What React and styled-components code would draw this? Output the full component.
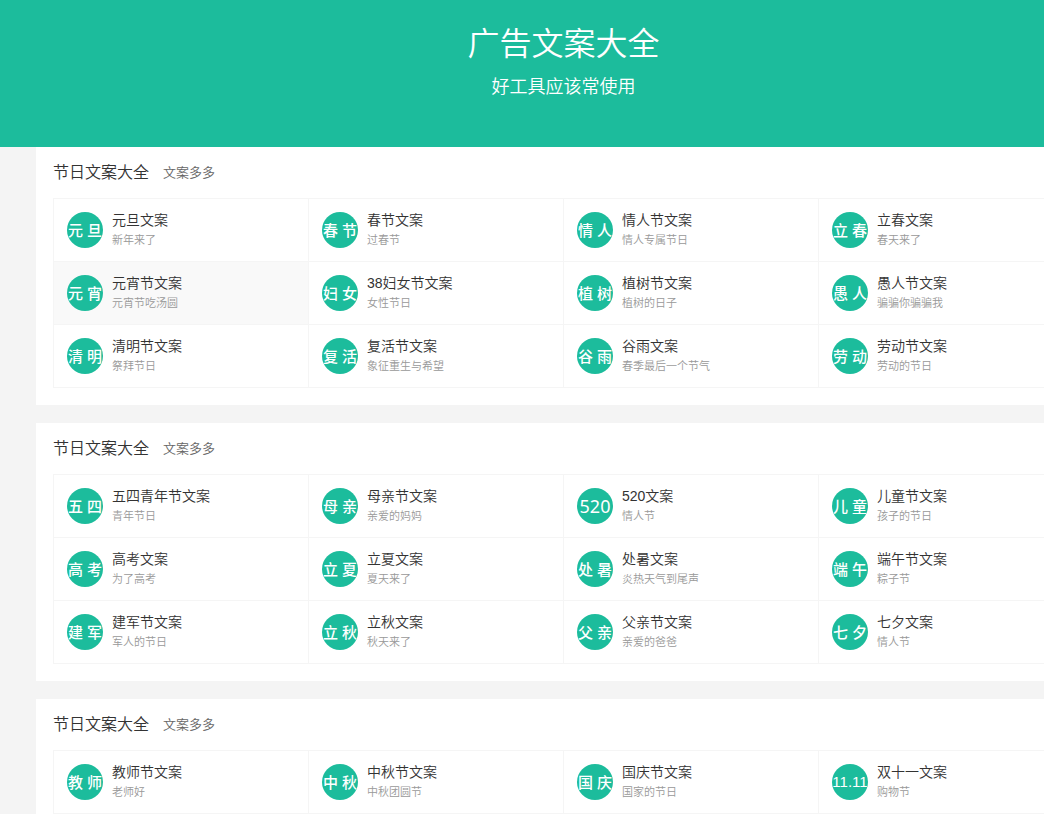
import React from "react";
import styled, { createGlobalStyle, ThemeProvider } from "styled-components";

const theme = {
  primaryColor: "#1cbc9c",
  lineColor: "#f5f5f5",
};

const GlobalStyles = createGlobalStyle`
  * {
    box-sizing: border-box;
  }
  html {
    overflow-x: hidden;
  }
  body {
    margin: 0;
    background-color: #f4f4f4;
    color: #333;
    font-family: "Liberation Sans", "Noto Sans CJK SC", sans-serif;
    font-weight: 350;
  }
  h1, h2, h3, p, ul {
    margin: 0;
    padding: 0;
    font-weight: 350;
  }
  a {
    color: inherit;
    text-decoration: none;
  }
`;

const PageStyles = styled.div`
  min-width: 1127px;
`;

const BannerStyles = styled.header`
  padding: 24px 0 48px;
  text-align: center;
  color: #fff;
  background-color: ${(props) => props.theme.primaryColor};
  .banner-title {
    font-size: 32px;
    line-height: 40px;
    padding-bottom: 11px;
  }
  .banner-desc {
    font-size: 18px;
    line-height: 24px;
  }
`;

const MainStyles = styled.main`
  display: flex;
  flex-direction: column;
  gap: 18px;
  padding: 0 36px 18px;
`;

const PanelStyles = styled.section`
  padding: 0 17px 17px;
  background-color: #fff;
`;

const PanelHead = styled.div`
  display: flex;
  align-items: center;
  gap: 14px;
  padding: 14px 0 13px;
  line-height: 24px;
  .panel-title {
    font-size: 16px;
  }
  .panel-more {
    font-size: 13px;
    color: #666;
  }
`;

const PanelGrid = styled.ul`
  display: grid;
  grid-template-columns: repeat(4, 1fr);
  list-style: none;
  border-top: 1px solid ${(props) => props.theme.lineColor};
  border-left: 1px solid ${(props) => props.theme.lineColor};
`;

const CardLink = styled.a`
  display: flex;
  align-items: center;
  gap: 9px;
  padding: 11px 13px;
  border-right: 1px solid ${(props) => props.theme.lineColor};
  border-bottom: 1px solid ${(props) => props.theme.lineColor};
  background-color: ${(props) => (props.$active ? "#f9f9f9" : "#fff")};
  &:hover {
    background-color: #f9f9f9;
  }
  .card-title {
    font-size: 14px;
    line-height: 20px;
  }
  .card-desc {
    font-size: 11px;
    line-height: 20px;
    color: #999;
  }
`;

const Badge = styled.span`
  display: flex;
  flex-shrink: 0;
  align-items: center;
  justify-content: center;
  gap: 4px;
  width: 36px;
  height: 36px;
  border-radius: 50%;
  overflow: hidden;
  color: #fff;
  font-family: "Noto Sans", "Noto Sans CJK SC", sans-serif;
  font-size: 15px;
  font-weight: 500;
  line-height: 34px;
  background-color: ${(props) => props.theme.primaryColor};
`;

const NumberBadge = styled(Badge)`
  font-family: ${(props) =>
    props.$narrow
      ? '"Liberation Sans Narrow", "Liberation Sans", sans-serif'
      : '"Noto Sans", sans-serif'};
  font-size: ${(props) => (props.$narrow ? "15px" : "18px")};
  font-weight: 400;
`;

const panels = [
  [
    { icon: "元旦", title: "元旦文案", desc: "新年来了" },
    { icon: "春节", title: "春节文案", desc: "过春节" },
    { icon: "情人", title: "情人节文案", desc: "情人专属节日" },
    { icon: "立春", title: "立春文案", desc: "春天来了" },
    { icon: "元宵", title: "元宵节文案", desc: "元宵节吃汤圆", active: true },
    { icon: "妇女", title: "38妇女节文案", desc: "女性节日" },
    { icon: "植树", title: "植树节文案", desc: "植树的日子" },
    { icon: "愚人", title: "愚人节文案", desc: "骗骗你骗骗我" },
    { icon: "清明", title: "清明节文案", desc: "祭拜节日" },
    { icon: "复活", title: "复活节文案", desc: "象征重生与希望" },
    { icon: "谷雨", title: "谷雨文案", desc: "春季最后一个节气" },
    { icon: "劳动", title: "劳动节文案", desc: "劳动的节日" },
  ],
  [
    { icon: "五四", title: "五四青年节文案", desc: "青年节日" },
    { icon: "母亲", title: "母亲节文案", desc: "亲爱的妈妈" },
    { icon: "520", title: "520文案", desc: "情人节" },
    { icon: "儿童", title: "儿童节文案", desc: "孩子的节日" },
    { icon: "高考", title: "高考文案", desc: "为了高考" },
    { icon: "立夏", title: "立夏文案", desc: "夏天来了" },
    { icon: "处暑", title: "处暑文案", desc: "炎热天气到尾声" },
    { icon: "端午", title: "端午节文案", desc: "粽子节" },
    { icon: "建军", title: "建军节文案", desc: "军人的节日" },
    { icon: "立秋", title: "立秋文案", desc: "秋天来了" },
    { icon: "父亲", title: "父亲节文案", desc: "亲爱的爸爸" },
    { icon: "七夕", title: "七夕文案", desc: "情人节" },
  ],
  [
    { icon: "教师", title: "教师节文案", desc: "老师好" },
    { icon: "中秋", title: "中秋节文案", desc: "中秋团圆节" },
    { icon: "国庆", title: "国庆节文案", desc: "国家的节日" },
    { icon: "11.11", title: "双十一文案", desc: "购物节" },
  ],
];

const CardBadge = ({ text }) => {
  if (/^[\d.]+$/.test(text)) {
    return (
      <NumberBadge $narrow={text.length > 3} aria-hidden="true">
        {text}
      </NumberBadge>
    );
  }
  return (
    <Badge aria-hidden="true">
      {text.split("").map((char) => (
        <span key={char}>{char}</span>
      ))}
    </Badge>
  );
};

const Card = ({ item }) => {
  return (
    <li>
      <CardLink href="#" $active={item.active}>
        <CardBadge text={item.icon} />
        <div>
          <h3 className="card-title">{item.title}</h3>
          <p className="card-desc">{item.desc}</p>
        </div>
      </CardLink>
    </li>
  );
};

const Panel = ({ data }) => {
  return (
    <PanelStyles>
      <PanelHead>
        <h2 className="panel-title">节日文案大全</h2>
        <span className="panel-more">文案多多</span>
      </PanelHead>
      <PanelGrid>
        {data.map((item) => (
          <Card key={item.title} item={item} />
        ))}
      </PanelGrid>
    </PanelStyles>
  );
};

const App = () => {
  return (
    <ThemeProvider theme={theme}>
      <GlobalStyles />
      <PageStyles>
        <BannerStyles>
          <h1 className="banner-title">广告文案大全</h1>
          <p className="banner-desc">好工具应该常使用</p>
        </BannerStyles>
        <MainStyles>
          {panels.map((data, index) => (
            <Panel key={index} data={data} />
          ))}
        </MainStyles>
      </PageStyles>
    </ThemeProvider>
  );
};

export default App;
